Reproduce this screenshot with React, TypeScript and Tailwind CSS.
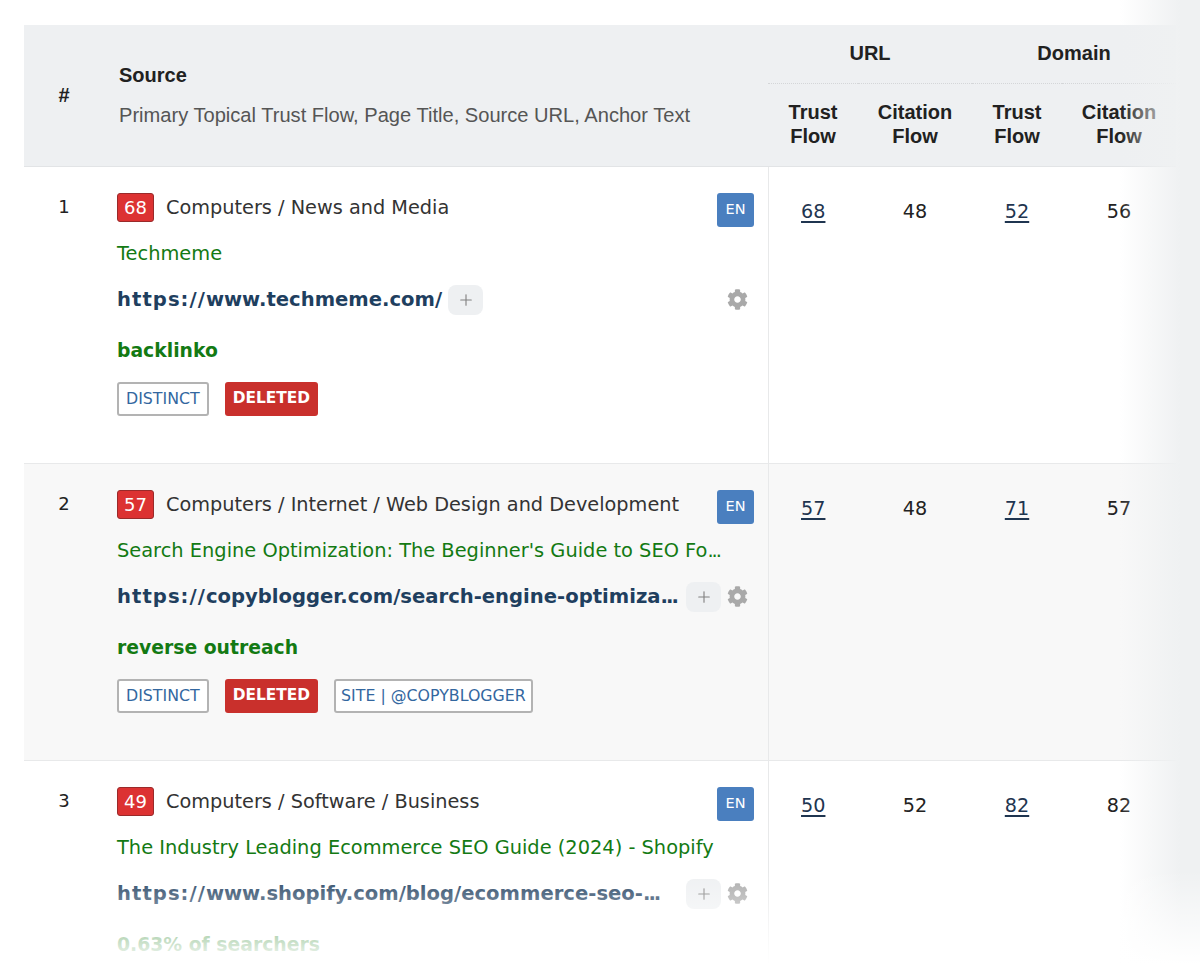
import { Plus } from "lucide-react";
import { FaCog } from "react-icons/fa";

interface Row {
  num: number;
  score: number;
  topic: string;
  title: string;
  url: string;
  anchor: string;
  tags: string[];
  metrics: number[];
}

const rows: Row[] = [
  {
    num: 1,
    score: 68,
    topic: "Computers / News and Media",
    title: "Techmeme",
    url: "https://www.techmeme.com/",
    anchor: "backlinko",
    tags: ["DISTINCT", "DELETED"],
    metrics: [68, 48, 52, 56],
  },
  {
    num: 2,
    score: 57,
    topic: "Computers / Internet / Web Design and Development",
    title: "Search Engine Optimization: The Beginner's Guide to SEO Fo...",
    url: "https://copyblogger.com/search-engine-optimiza...",
    anchor: "reverse outreach",
    tags: ["DISTINCT", "DELETED", "SITE | @COPYBLOGGER"],
    metrics: [57, 48, 71, 57],
  },
  {
    num: 3,
    score: 49,
    topic: "Computers / Software / Business",
    title: "The Industry Leading Ecommerce SEO Guide (2024) - Shopify",
    url: "https://www.shopify.com/blog/ecommerce-seo-...",
    anchor: "0.63% of searchers",
    tags: [],
    metrics: [50, 52, 82, 82],
  },
];

// the dots of a cut-off string sit closer together than the font's own spacing
const withDots = (text: string) =>
  text.endsWith("...") ? (
    <>
      {text.slice(0, -3)}
      <span className="tracking-[-2px]">...</span>
    </>
  ) : (
    text
  );

const Tag = ({ label }: { label: string }) => {
  if (label === "DELETED") {
    return (
      <span className="flex h-[34px] items-center rounded-[3px] bg-[#c9302c] px-[8px] pt-[1px] text-[15.4px] font-bold text-white">
        {label}
      </span>
    );
  }
  const pad = label.startsWith("SITE") ? "px-[5px]" : "px-[7px]";
  return (
    <span className={`flex h-[34px] items-center rounded-[3px] border-2 border-[#b3b3b3] bg-white ${pad} text-[15.8px] text-[#33679f]`}>
      {label}
    </span>
  );
};

const SourceCell = ({ row }: { row: Row }) => (
  <div className="flex h-[296px] w-[637px] flex-col pt-[26px]">
    <div className="flex h-[34px] items-start justify-between">
      <div className="flex items-center gap-[12px]">
        <span className="flex h-[29px] w-[37px] items-center justify-center rounded-[3px] border border-[#9a2a2a] bg-[#dc3232] text-[18px] text-white">
          {row.score}
        </span>
        <span className="pt-[1px] text-[19.3px] whitespace-nowrap text-[#333333]">{row.topic}</span>
      </div>
      <span className="flex h-[34px] w-[37px] items-center justify-center rounded-[3px] bg-[#4a7fbf] text-[14.5px] text-white">
        EN
      </span>
    </div>
    <div className="mt-[15px] h-[24px] whitespace-nowrap text-[19.4px] leading-[24px] text-[#137a13]">{withDots(row.title)}</div>
    <div className="mt-[19px] flex h-[30px] items-center">
      <span className={`text-[19.6px] font-bold whitespace-nowrap text-[#1f3f5f] ${row.url.endsWith("...") ? "w-[563px]" : ""}`}>
        <span className="tracking-[1.05px]">{row.url.slice(0, 8)}</span>
        {withDots(row.url.slice(8))}
      </span>
      <span className="ml-[6px] flex h-[30px] w-[35px] shrink-0 items-center justify-center rounded-[8px] bg-[#eef0f2]">
        <Plus size={18} strokeWidth={1.5} className="text-[#808080]" />
      </span>
      <FaCog className="mr-[6px] ml-auto text-[21px] text-[#a9a9a9]" />
    </div>
    <div className="mt-[24px] h-[24px] text-[18.8px] leading-[24px] font-bold text-[#137a13]">{row.anchor}</div>
    <div className="mt-[19px] flex gap-[16px]">
      {row.tags.map((t) => (
        <Tag key={t} label={t} />
      ))}
    </div>
  </div>
);

export default function App() {
  return (
    <div className="relative h-[964px] w-[1200px] overflow-hidden bg-white pt-[25px] pl-[24px] font-['DejaVu_Sans',sans-serif]">
      <table className="w-[1152px] table-fixed border-collapse">
        <colgroup>
          <col className="w-[80px]" />
          <col className="w-[664px]" />
          <col className="w-[90px]" />
          <col className="w-[114px]" />
          <col className="w-[90px]" />
          <col className="w-[114px]" />
        </colgroup>
        <thead className="bg-[#eef0f2] font-['Liberation_Sans',sans-serif] text-[#212121]">
          <tr className="h-[58px]">
            <th rowSpan={2} className="border-b border-[#e2e4e6] text-center text-[20px] font-bold">
              #
            </th>
            <th rowSpan={2} className="border-b border-[#e2e4e6] pl-[15px] text-left align-middle">
              <div className="text-[20px] font-bold">Source</div>
              <div className="mt-[10px] text-[20.1px] font-normal text-[#555555]">
                Primary Topical Trust Flow, Page Title, Source URL, Anchor Text
              </div>
            </th>
            <th colSpan={2} className="border-b border-dotted border-[#d4d6d8] pb-[2px] text-[20px] font-bold">
              URL
            </th>
            <th colSpan={2} className="border-b border-dotted border-[#d4d6d8] pb-[2px] text-[20px] font-bold">
              Domain
            </th>
          </tr>
          <tr className="h-[83px] text-[20px] leading-[24px] font-bold">
            <th className="border-b border-[#e2e4e6] pb-[2px]">
              Trust
              <br />
              Flow
            </th>
            <th className="border-b border-[#e2e4e6] pb-[2px]">
              Citation
              <br />
              Flow
            </th>
            <th className="border-b border-[#e2e4e6] pb-[2px]">
              Trust
              <br />
              Flow
            </th>
            <th className="border-b border-[#e2e4e6] pb-[2px]">
              Citation
              <br />
              Flow
            </th>
          </tr>
        </thead>
        <tbody>
          {rows.map((row, i) => (
            <tr key={row.num} className={i === 1 ? "border-b border-[#e8e9ea] bg-[#f8f8f8]" : "border-b border-[#e8e9ea]"}>
              <td className="pt-[28px] text-center align-top text-[18px] leading-[24px] text-[#222222]">{row.num}</td>
              <td className="pl-[13px] align-top">
                <SourceCell row={row} />
              </td>
              {row.metrics.map((m, j) => (
                <td
                  key={j}
                  className={`pt-[33px] text-center align-top text-[19.2px] leading-[24px] text-[#222222] ${j === 0 ? "border-l border-[#e8e9ea]" : ""}`}
                >
                  {j % 2 === 0 ? (
                    <span className="text-[#1f3550] underline decoration-2 underline-offset-[3px]">{m}</span>
                  ) : (
                    m
                  )}
                </td>
              ))}
            </tr>
          ))}
        </tbody>
      </table>
      {/* fade at the right edge and the bottom */}
      <div className="pointer-events-none absolute top-0 right-0 h-full w-[80px] bg-[linear-gradient(to_right,transparent,#eff1f2_75%)]" />
      <div className="pointer-events-none absolute right-0 bottom-0 left-0 h-[94px] bg-[linear-gradient(to_bottom,transparent,white)]" />
    </div>
  );
}
